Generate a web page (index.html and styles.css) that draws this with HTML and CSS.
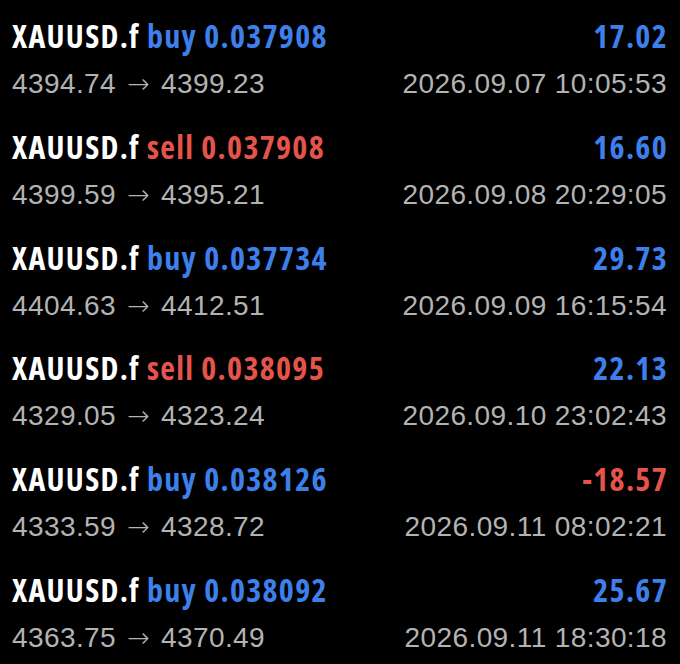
FILE: index.html
```html
<!DOCTYPE html>
<html lang="en">
<head>
    <meta charset="UTF-8">
    <meta name="viewport" content="width=device-width, initial-scale=1.0">
    <title>History</title>
    <link rel="stylesheet" href="styles.css">
</head>
<body>

<section class="history">
    <div class="deal">
        <div class="line">
            <span class="title">XAUUSD.f <span class="buy">buy 0.037908</span></span>
            <span class="profit">17.02</span>
        </div>
        <div class="line sub">
            <span>4394.74 <span class="arrow">→</span> 4399.23</span>
            <span>2026.09.07 10:05:53</span>
        </div>
    </div>

    <div class="deal">
        <div class="line">
            <span class="title">XAUUSD.f <span class="sell">sell 0.037908</span></span>
            <span class="profit">16.60</span>
        </div>
        <div class="line sub">
            <span>4399.59 <span class="arrow">→</span> 4395.21</span>
            <span>2026.09.08 20:29:05</span>
        </div>
    </div>

    <div class="deal">
        <div class="line">
            <span class="title">XAUUSD.f <span class="buy">buy 0.037734</span></span>
            <span class="profit">29.73</span>
        </div>
        <div class="line sub">
            <span>4404.63 <span class="arrow">→</span> 4412.51</span>
            <span>2026.09.09 16:15:54</span>
        </div>
    </div>

    <div class="deal">
        <div class="line">
            <span class="title">XAUUSD.f <span class="sell">sell 0.038095</span></span>
            <span class="profit">22.13</span>
        </div>
        <div class="line sub">
            <span>4329.05 <span class="arrow">→</span> 4323.24</span>
            <span>2026.09.10 23:02:43</span>
        </div>
    </div>

    <div class="deal">
        <div class="line">
            <span class="title">XAUUSD.f <span class="buy">buy 0.038126</span></span>
            <span class="profit loss">-18.57</span>
        </div>
        <div class="line sub">
            <span>4333.59 <span class="arrow">→</span> 4328.72</span>
            <span>2026.09.11 08:02:21</span>
        </div>
    </div>

    <div class="deal">
        <div class="line">
            <span class="title">XAUUSD.f <span class="buy">buy 0.038092</span></span>
            <span class="profit">25.67</span>
        </div>
        <div class="line sub">
            <span>4363.75 <span class="arrow">→</span> 4370.49</span>
            <span>2026.09.11 18:30:18</span>
        </div>
    </div>
</section>

</body>
</html>
```
FILE: styles.css
```css
body {
    margin: 0;
    padding: 0;
    background-color: #000;
    color: #fff;
}
.history {
    display: flex;
    flex-direction: column;
}
.deal {
    padding: 14px 12px 4.8px 12px;
}
.line {
    display: flex;
    justify-content: space-between;
    align-items: baseline;
    font-family: "Open Sans", sans-serif;
    font-stretch: 75%;
    font-weight: 700;
    font-size: 32px;
    line-height: 44px;
    letter-spacing: 1.3px;
    white-space: nowrap;
}
.sub {
    margin-top: 4px;
    font-family: "Liberation Sans", Arial, sans-serif;
    font-stretch: normal;
    font-weight: 400;
    font-size: 28px;
    letter-spacing: 0.4px;
    color: #b3b3b3;
}
.sub > span:last-child {
    margin-right: 1px;
}
.arrow {
    margin: 0 3px;
    font-family: "DejaVu Sans", sans-serif;
    font-weight: 200;
    font-size: 27px;
    letter-spacing: 0;
}
.buy,
.profit {
    color: #3d80ec;
}
.sell,
.loss {
    color: #e4544b;
}
```
